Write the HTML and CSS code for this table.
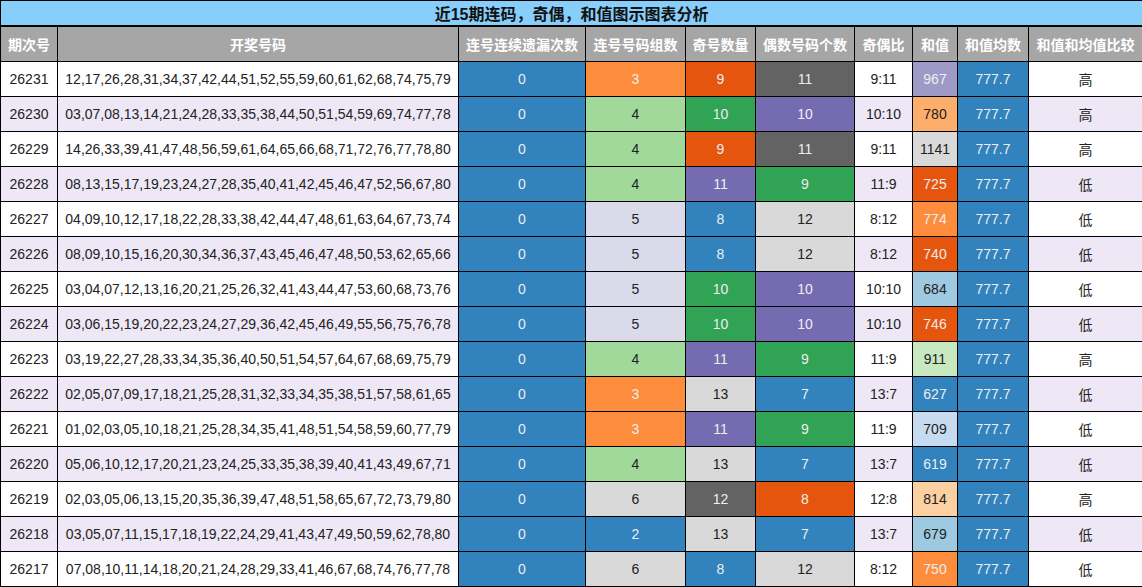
FILE: index.html
```html
<!DOCTYPE html>
<html lang="zh-CN">
<head>
<meta charset="utf-8">
<title>近15期连码，奇偶，和值图示图表分析</title>
<link rel="stylesheet" href="styles.css">
</head>
<body>
<table class="chart">
<colgroup>
<col class="w-issue"><col class="w-nums"><col class="w-miss"><col class="w-groups"><col class="w-odd"><col class="w-even"><col class="w-ratio"><col class="w-sum"><col class="w-avg"><col class="w-cmp">
</colgroup>
<thead>
<tr class="title-row"><th colspan="10">近15期连码，奇偶，和值图示图表分析</th></tr>
<tr class="head-row"><th>期次号</th><th>开奖号码</th><th>连号连续遗漏次数</th><th>连号号码组数</th><th>奇号数量</th><th>偶数号码个数</th><th>奇偶比</th><th>和值</th><th>和值均数</th><th>和值和均值比较</th></tr>
</thead>
<tbody>
<tr><td>26231</td><td>12,17,26,28,31,34,37,42,44,51,52,55,59,60,61,62,68,74,75,79</td><td class="c-blue">0</td><td class="c-orange">3</td><td class="c-dorange">9</td><td class="c-dgray">11</td><td>9:11</td><td class="c-lpurple">967</td><td class="c-blue">777.7</td><td>高</td></tr>
<tr class="alt"><td>26230</td><td>03,07,08,13,14,21,24,28,33,35,38,44,50,51,54,59,69,74,77,78</td><td class="c-blue">0</td><td class="c-lgreen">4</td><td class="c-green">10</td><td class="c-purple">10</td><td>10:10</td><td class="c-lorange">780</td><td class="c-blue">777.7</td><td>高</td></tr>
<tr><td>26229</td><td>14,26,33,39,41,47,48,56,59,61,64,65,66,68,71,72,76,77,78,80</td><td class="c-blue">0</td><td class="c-lgreen">4</td><td class="c-dorange">9</td><td class="c-dgray">11</td><td>9:11</td><td class="c-lgray">1141</td><td class="c-blue">777.7</td><td>高</td></tr>
<tr class="alt"><td>26228</td><td>08,13,15,17,19,23,24,27,28,35,40,41,42,45,46,47,52,56,67,80</td><td class="c-blue">0</td><td class="c-lgreen">4</td><td class="c-purple">11</td><td class="c-green">9</td><td>11:9</td><td class="c-dorange">725</td><td class="c-blue">777.7</td><td>低</td></tr>
<tr><td>26227</td><td>04,09,10,12,17,18,22,28,33,38,42,44,47,48,61,63,64,67,73,74</td><td class="c-blue">0</td><td class="c-lav">5</td><td class="c-blue">8</td><td class="c-lgray">12</td><td>8:12</td><td class="c-orange">774</td><td class="c-blue">777.7</td><td>低</td></tr>
<tr class="alt"><td>26226</td><td>08,09,10,15,16,20,30,34,36,37,43,45,46,47,48,50,53,62,65,66</td><td class="c-blue">0</td><td class="c-lav">5</td><td class="c-blue">8</td><td class="c-lgray">12</td><td>8:12</td><td class="c-dorange">740</td><td class="c-blue">777.7</td><td>低</td></tr>
<tr><td>26225</td><td>03,04,07,12,13,16,20,21,25,26,32,41,43,44,47,53,60,68,73,76</td><td class="c-blue">0</td><td class="c-lav">5</td><td class="c-green">10</td><td class="c-purple">10</td><td>10:10</td><td class="c-lblue">684</td><td class="c-blue">777.7</td><td>低</td></tr>
<tr class="alt"><td>26224</td><td>03,06,15,19,20,22,23,24,27,29,36,42,45,46,49,55,56,75,76,78</td><td class="c-blue">0</td><td class="c-lav">5</td><td class="c-green">10</td><td class="c-purple">10</td><td>10:10</td><td class="c-dorange">746</td><td class="c-blue">777.7</td><td>低</td></tr>
<tr><td>26223</td><td>03,19,22,27,28,33,34,35,36,40,50,51,54,57,64,67,68,69,75,79</td><td class="c-blue">0</td><td class="c-lgreen">4</td><td class="c-purple">11</td><td class="c-green">9</td><td>11:9</td><td class="c-pgreen">911</td><td class="c-blue">777.7</td><td>高</td></tr>
<tr class="alt"><td>26222</td><td>02,05,07,09,17,18,21,25,28,31,32,33,34,35,38,51,57,58,61,65</td><td class="c-blue">0</td><td class="c-orange">3</td><td class="c-lgray">13</td><td class="c-blue">7</td><td>13:7</td><td class="c-blue">627</td><td class="c-blue">777.7</td><td>低</td></tr>
<tr><td>26221</td><td>01,02,03,05,10,18,21,25,28,34,35,41,48,51,54,58,59,60,77,79</td><td class="c-blue">0</td><td class="c-orange">3</td><td class="c-purple">11</td><td class="c-green">9</td><td>11:9</td><td class="c-pblue">709</td><td class="c-blue">777.7</td><td>低</td></tr>
<tr class="alt"><td>26220</td><td>05,06,10,12,17,20,21,23,24,25,33,35,38,39,40,41,43,49,67,71</td><td class="c-blue">0</td><td class="c-lgreen">4</td><td class="c-lgray">13</td><td class="c-blue">7</td><td>13:7</td><td class="c-blue">619</td><td class="c-blue">777.7</td><td>低</td></tr>
<tr><td>26219</td><td>02,03,05,06,13,15,20,35,36,39,47,48,51,58,65,67,72,73,79,80</td><td class="c-blue">0</td><td class="c-lgray">6</td><td class="c-dgray">12</td><td class="c-dorange">8</td><td>12:8</td><td class="c-porange">814</td><td class="c-blue">777.7</td><td>高</td></tr>
<tr class="alt"><td>26218</td><td>03,05,07,11,15,17,18,19,22,24,29,41,43,47,49,50,59,62,78,80</td><td class="c-blue">0</td><td class="c-blue">2</td><td class="c-lgray">13</td><td class="c-blue">7</td><td>13:7</td><td class="c-lblue">679</td><td class="c-blue">777.7</td><td>低</td></tr>
<tr><td>26217</td><td>07,08,10,11,14,18,20,21,24,28,29,33,41,46,67,68,74,76,77,78</td><td class="c-blue">0</td><td class="c-lgray">6</td><td class="c-blue">8</td><td class="c-lgray">12</td><td>8:12</td><td class="c-orange">750</td><td class="c-blue">777.7</td><td>低</td></tr>
</tbody>
</table>
</body>
</html>
```
FILE: styles.css
```css
html, body {
  margin: 0;
  padding: 0;
  background: #ffffff;
}

.chart {
  width: 1142px;
  table-layout: fixed;
  border-collapse: collapse;
  font-family: "Liberation Sans", Arial, "Noto Sans CJK SC", sans-serif;
  font-size: 14px;
  color: #222222;
}

.w-issue { width: 57px; }
.w-nums { width: 401px; }
.w-miss { width: 127px; }
.w-groups { width: 100px; }
.w-odd { width: 70px; }
.w-even { width: 99px; }
.w-ratio { width: 58px; }
.w-sum { width: 45px; }
.w-avg { width: 71px; }
.w-cmp { width: 114px; }

.chart th,
.chart td {
  border: 1px solid #000000;
  text-align: center;
  padding: 0;
  white-space: nowrap;
  overflow: hidden;
}

.title-row th {
  height: 24px;
  background: #87cefa;
  color: #111111;
  font-size: 16px;
  font-weight: bold;
  border-bottom-width: 2px;
}

.head-row th {
  height: 34px;
  background: #a6a6a6;
  color: #ffffff;
  font-size: 14px;
  font-weight: bold;
}

.chart tbody td {
  height: 34px;
}

.chart tbody tr.alt {
  background: #ede7f6;
}

.c-blue { background: #3182bd; color: #eeeeee !important; }
.c-orange { background: #fd8d3c; color: #eeeeee !important; }
.c-dorange { background: #e6550d; color: #eeeeee !important; }
.c-dgray { background: #636363; color: #eeeeee !important; }
.c-green { background: #31a354; color: #eeeeee !important; }
.c-purple { background: #756bb1; color: #eeeeee !important; }
.c-lpurple { background: #9e9ac8; color: #eeeeee !important; }
.c-lgreen { background: #a1d99b; }
.c-lav { background: #dadaeb; }
.c-lgray { background: #d9d9d9; }
.c-lorange { background: #fdae6b; }
.c-porange { background: #fdd0a2; }
.c-lblue { background: #9ecae1; }
.c-pblue { background: #c6dbef; }
.c-pgreen { background: #c7e9c0; }
```
